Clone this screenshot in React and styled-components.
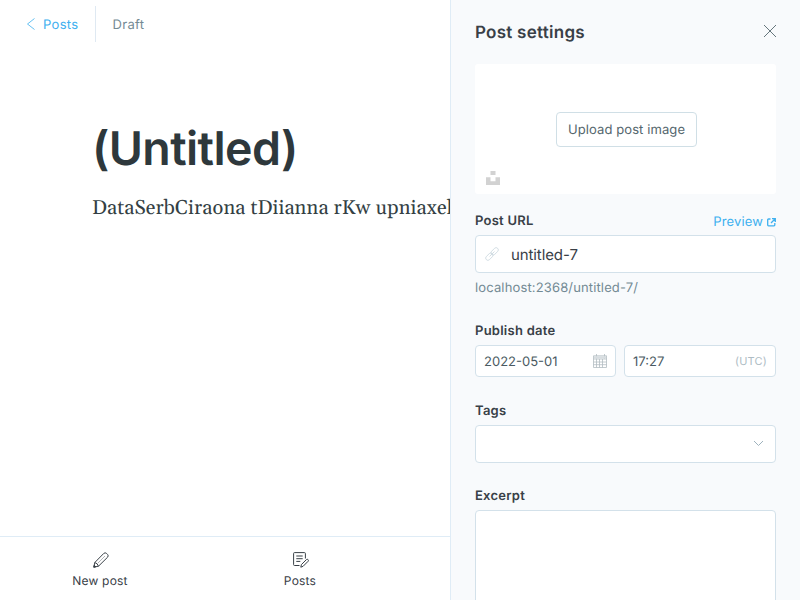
import React from "react";
import styled, { createGlobalStyle } from "styled-components";

const GlobalStyle = createGlobalStyle`
  * { box-sizing: border-box; }
  body {
    margin: 0;
    overflow: hidden;
    background: #fff;
    color: #394047;
    font-family: Inter, "Liberation Sans", sans-serif;
    font-size: 13px;
    text-rendering: geometricPrecision;
  }
  svg { display: block; flex: none; }
`;

const Layout = styled.div`
  display: flex;
  width: 800px;
  height: 600px;
  overflow: hidden;
`;

const Editor = styled.main`
  display: flex;
  flex-direction: column;
  width: 450px;
  overflow: hidden;
  background: #fff;
`;

const EditorHeader = styled.header`
  display: flex;
  align-items: center;
  height: 48px;
  padding: 6px 24px 6px 26px;
  line-height: 16px;
`;

const BackLink = styled.a`
  display: flex;
  align-items: center;
  gap: 7px;
  width: 70px;
  height: 36px;
  border-right: 1px solid #dfe9f2;
  color: #3eb0ef;
  letter-spacing: 0.3px;
`;

const BackText = styled.span`
  padding-top: 1px;
`;

const Status = styled.span`
  margin-left: 16.500px;
  padding-top: 1px;
  color: #738a94;
  letter-spacing: 0.3px;
`;

const Canvas = styled.article`
  flex: 1;
  padding: 73px 0 0 92px;
  white-space: nowrap;
`;

const Title = styled.h1`
  margin: 0;
  color: #2e383c;
  font-size: 46.500px;
  font-weight: 600;
  line-height: 57px;
  letter-spacing: -0.6px;
`;

const BodyText = styled.p`
  margin: 14px 0 0;
  color: #343f44;
  font-family: Georgia, Gelasio, "Liberation Serif", serif;
  font-size: 20px;
  line-height: 32px;
  letter-spacing: 0.1px;
`;

const MobileNav = styled.nav`
  display: grid;
  grid-template-columns: 200px 200px;
  height: 64px;
  border-top: 1px solid #dfecf6;
`;

const NavItem = styled.a`
  display: flex;
  flex-direction: column;
  align-items: center;
  gap: 4px;
  padding: 15px 0 0 0;
  color: #394047;
  font-size: 12px;
  line-height: 18px;
  letter-spacing: 0.2px;

  svg { margin-left: 1px; }
`;

const Panel = styled.aside`
  width: 350px;
  padding: 0 24px 0 24px;
  border-left: 1px solid #dfecf6;
  background: #f8fafc;
`;

const PanelHeader = styled.div`
  display: flex;
  align-items: center;
  justify-content: space-between;
  height: 64px;
`;

const PanelTitle = styled.h2`
  margin: 0;
  padding-top: 2px;
  font-size: 17px;
  font-weight: 600;
  letter-spacing: 0.26px;
  line-height: 24px;
  color: #394047;
`;

const ImageDrop = styled.div`
  display: grid;
  grid-template-rows: 48px 35px 1fr;
  height: 130px;
  margin-bottom: 17px;
  border-radius: 3px;
  background: #fff;
`;

const UploadButton = styled.button`
  grid-row: 2;
  justify-self: center;
  width: 141px;
  margin-left: 2px;
  padding: 1px 0 0;
  border: 1px solid #d0dfe6;
  border-radius: 4px;
  background: #fff;
  color: #54666d;
  font: 400 13px Inter, sans-serif;
  letter-spacing: 0.1px;
  text-rendering: inherit;
`;

const SourceIcon = styled.div`
  grid-row: 3;
  padding: 24px 0 0 11px;
`;

const FieldHead = styled.div`
  display: flex;
  align-items: center;
  justify-content: space-between;
  height: 20px;
  margin-bottom: 4px;
`;

const Label = styled.label`
  color: #394047;
  font-size: 13px;
  font-weight: 600;
  line-height: 20px;
  letter-spacing: 0.25px;
`;

const PreviewLink = styled.a`
  display: flex;
  align-items: center;
  gap: 4px;
  padding: 2px 0 0 0;
  color: #3eb0ef;
  letter-spacing: 0.15px;
`;

const Field = styled.div`
  margin-bottom: ${(p) => p.$gap}px;
`;

const InputBox = styled.div`
  display: flex;
  align-items: center;
  justify-content: space-between;
  width: ${(p) => (p.$width ? `${p.$width}px` : "100%")};
  height: ${(p) => p.$height}px;
  padding: 0 8px;
  border: 1px solid #d3e1ea;
  border-radius: 4px;
  background: #fff;
  color: #4a5a62;
  line-height: 18px;
`;

const InputText = styled.span`
  padding-top: 1px;
`;

const UrlInput = styled(InputBox)`
  justify-content: flex-start;
  gap: 12px;
  padding-left: 9px;
  color: #394047;
  font-size: 15px;
  line-height: 20px;
  letter-spacing: -0.1px;
`;

const UrlText = styled.span`
  padding-top: 2px;
`;

const SelectInput = styled(InputBox)`
  justify-content: flex-end;
  padding: 0 11px 1px 8px;
`;

const Hint = styled.p`
  margin: 5px 0 0;
  color: #738a94;
  line-height: 20px;
  letter-spacing: 0.14px;
`;

const DateRow = styled.div`
  display: flex;
  gap: 8px;
`;

const Zone = styled.span`
  padding-bottom: 1px;
  color: #aebcc4;
  font-size: 11px;
  letter-spacing: 0.2px;
`;

const BackIcon = () => (
  <svg width="10" height="12" viewBox="0 0 10 12" fill="none" stroke="currentColor" strokeWidth="0.8">
    <path d="M8.500 .5 1.500 6l7 5.500" />
  </svg>
);

const CloseSvg = styled.svg`
  margin: 0 -1px 2px 0;
`;

const CloseIcon = () => (
  <CloseSvg width="14" height="14" viewBox="0 0 14 14" fill="none" stroke="#54666d" strokeWidth="0.9">
    <path d="M1 1 13 13M13 1 1 13" />
  </CloseSvg>
);

const UnsplashIcon = () => (
  <svg width="14" height="14" viewBox="0 0 14 14" fill="#d2d2d2">
    <path d="M4.500 0h5v4h-5zM0 6.200h4.500v4h5v-4H14V14H0z" />
  </svg>
);

const ExternalIcon = () => (
  <svg width="9" height="9" viewBox="0 0 9 9" fill="none" stroke="currentColor" strokeWidth="1.300">
    <path d="M3.500 1H1.500Q.7 1 .7 1.800v5.200q0 .8.800.8H7q.8 0 .8-.8v-2M5 .7h3.300V4M8.200.8 4 5" />
  </svg>
);

const LinkIcon = () => (
  <svg width="14" height="14" viewBox="0 0 14 14" fill="none" stroke="#cbd8df" strokeWidth="0.8">
    <g transform="rotate(-45 7 7)">
      <rect x="-1" y="4.800" width="8.500" height="4.400" rx="2.200" />
      <rect x="6.500" y="4.800" width="8.500" height="4.400" rx="2.200" />
      <path d="M3.500 7h7" />
    </g>
  </svg>
);

const CalendarIcon = () => (
  <svg width="14" height="14" viewBox="0 0 14 14" fill="none" stroke="#b3bdc2" strokeWidth="0.8">
    <path d="M.5 1.800h13v11.700H.5zM.5 5h13M3.500 0v13.500M6.500 5v8.500M9.500 5v8.500M11.500 0v5M.5 8h13M.5 10.700h13" />
    <path d="M1 2.200h12v2.500H1z" fill="#d7dde0" stroke="none" />
  </svg>
);

const ChevronIcon = () => (
  <svg width="11" height="7" viewBox="0 0 11 7" fill="none" stroke="#9eb2bd" strokeWidth="1">
    <path d="M1 1l4.500 4.500L10 1" />
  </svg>
);

const PenIcon = () => (
  <svg width="16" height="16" viewBox="0 0 16 16" fill="none" stroke="#394047" strokeWidth="1" strokeLinejoin="round">
    <path d="M.8 15.200l1-4.700L10.800 1.400q1.300-1.200 2.700 0l1.100 1.100q1.200 1.300 0 2.700L5.500 14.200zM1.800 10.500q2.700.7 3.700 3.700" />
    <path d="M12 4 4.800 11.200" strokeWidth="0.4" />
    <path d="M.8 15.200l.4-2 1.600 1.600z" fill="#394047" />
  </svg>
);

const PostsIcon = () => (
  <svg width="16" height="16" viewBox="0 0 16 16" fill="none" stroke="#394047" strokeWidth="1" strokeLinejoin="round">
    <path d="M6.500 13.500h-5q-.9 0-.9-.9V1.500q0-.9.900-.9h10q.9 0 .9.900v5M3.300 4h6.400M3.300 6.700h6.400M3.300 9.400h4" />
    <path d="M7.800 15.200l.6-2.600 5-5q.9-.7 1.700.1.700.8 0 1.600l-5 5z" />
  </svg>
);

export default function App() {
  return (
    <>
      <GlobalStyle />
      <Layout>
        <Editor>
          <EditorHeader>
            <BackLink>
              <BackIcon />
              <BackText>Posts</BackText>
            </BackLink>
            <Status>Draft</Status>
          </EditorHeader>
          <Canvas>
            <Title>(Untitled)</Title>
            <BodyText>DataSerbCiraona tDiianna rKw upniaxel</BodyText>
          </Canvas>
          <MobileNav>
            <NavItem>
              <PenIcon />
              New post
            </NavItem>
            <NavItem>
              <PostsIcon />
              Posts
            </NavItem>
          </MobileNav>
        </Editor>
        <Panel>
          <PanelHeader>
            <PanelTitle>Post settings</PanelTitle>
            <CloseIcon />
          </PanelHeader>
          <ImageDrop>
            <UploadButton>Upload post image</UploadButton>
            <SourceIcon>
              <UnsplashIcon />
            </SourceIcon>
          </ImageDrop>
          <Field $gap={23}>
            <FieldHead>
              <Label>Post URL</Label>
              <PreviewLink>
                Preview
                <ExternalIcon />
              </PreviewLink>
            </FieldHead>
            <UrlInput $height={38}>
              <LinkIcon />
              <UrlText>untitled-7</UrlText>
            </UrlInput>
            <Hint>localhost:2368/untitled-7/</Hint>
          </Field>
          <Field $gap={24}>
            <FieldHead>
              <Label>Publish date</Label>
            </FieldHead>
            <DateRow>
              <InputBox $height={32} $width={141}>
                <InputText>2022-05-01</InputText>
                <CalendarIcon />
              </InputBox>
              <InputBox $height={32} $width={152}>
                <InputText>17:27</InputText>
                <Zone>(UTC)</Zone>
              </InputBox>
            </DateRow>
          </Field>
          <Field $gap={23}>
            <FieldHead>
              <Label>Tags</Label>
            </FieldHead>
            <SelectInput $height={38}>
              <ChevronIcon />
            </SelectInput>
          </Field>
          <Field $gap={0}>
            <FieldHead>
              <Label>Excerpt</Label>
            </FieldHead>
            <InputBox $height={108} />
          </Field>
        </Panel>
      </Layout>
    </>
  );
}
